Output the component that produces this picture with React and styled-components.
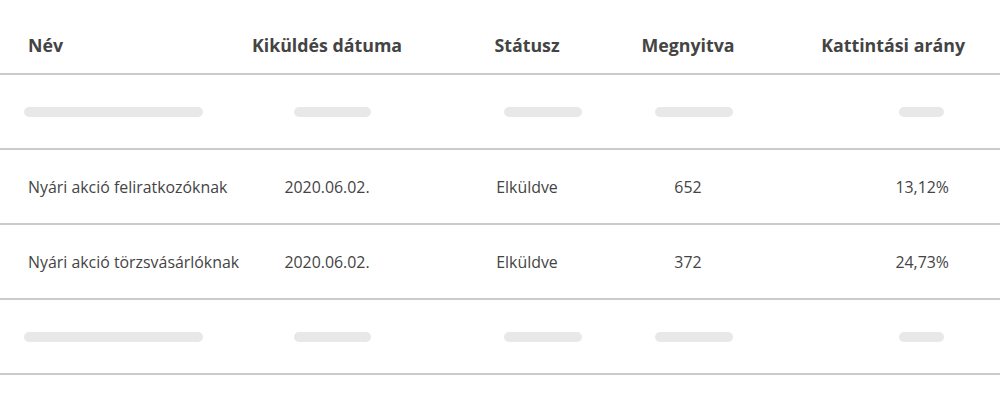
import React from 'react';
import styled, { createGlobalStyle } from 'styled-components';

const GlobalStyle = createGlobalStyle`
	body {
		margin: 0;
		background: #ffffff;
		font-family: 'Open Sans', 'Noto Sans', sans-serif;
		color: #444444;
	}
`;

const Table = styled.div`
	width: 1000px;
	display: flex;
	flex-direction: column;
`;

const Row = styled.div`
	display: grid;
	grid-template-columns: 238px 178px 222px 100px 262px;
	align-items: center;
	height: ${(p) => (p.$head ? '56px' : '73px')};
	padding-top: ${(p) => (p.$head ? '17px' : '0')};
	border-bottom: 2px solid #cbcbcb;
`;

const Cell = styled.div`
	display: flex;
	justify-content: ${(p) => p.$justify || 'center'};
	padding-left: ${(p) => p.$left || 0}px;
	padding-right: ${(p) => p.$right || 0}px;
	white-space: nowrap;
`;

const HeadText = styled.span`
	font-size: 17.8px;
	font-weight: 700;
	color: #444444;
`;

const BodyText = styled.span`
	font-size: 15.9px;
	color: #444444;
`;

const Skeleton = styled.span`
	display: block;
	height: 10px;
	width: ${(p) => p.$w}px;
	margin-left: ${(p) => p.$shift || 0}px;
	border-radius: 5px;
	background: #e8e8e8;
`;

const columns = [
	{ title: 'Név', justify: 'flex-start', left: 28, bodyLeft: 28, skLeft: 24, sk: 179 },
	{ title: 'Kiküldés dátuma', sk: 77, skShift: 10 },
	{ title: 'Státusz', sk: 78, skShift: 32 },
	{ title: 'Megnyitva', sk: 78, skShift: 12 },
	{ title: 'Kattintási arány', justify: 'flex-end', right: 35, bodyRight: 51, skRight: 56, sk: 45 },
];

const rows = [
	['Nyári akció feliratkozóknak', '2020.06.02.', 'Elküldve', '652', '13,12%'],
	['Nyári akció törzsvásárlóknak', '2020.06.02.', 'Elküldve', '372', '24,73%'],
];

const SkeletonRow = () => (
	<Row>
		{columns.map((c) => (
			<Cell key={c.title} $justify={c.justify} $left={c.skLeft} $right={c.skRight}>
				<Skeleton $w={c.sk} $shift={c.skShift} />
			</Cell>
		))}
	</Row>
);

const App = () => (
	<>
		<GlobalStyle />
		<Table>
			<Row $head>
				{columns.map((c) => (
					<Cell key={c.title} $justify={c.justify} $left={c.left} $right={c.right}>
						<HeadText>{c.title}</HeadText>
					</Cell>
				))}
			</Row>
			<SkeletonRow />
			{rows.map((r) => (
				<Row key={r[0]}>
					{r.map((v, i) => (
						<Cell
							key={i}
							$justify={columns[i].justify}
							$left={columns[i].bodyLeft}
							$right={columns[i].bodyRight}
						>
							<BodyText>{v}</BodyText>
						</Cell>
					))}
				</Row>
			))}
			<SkeletonRow />
		</Table>
	</>
);

export default App;
